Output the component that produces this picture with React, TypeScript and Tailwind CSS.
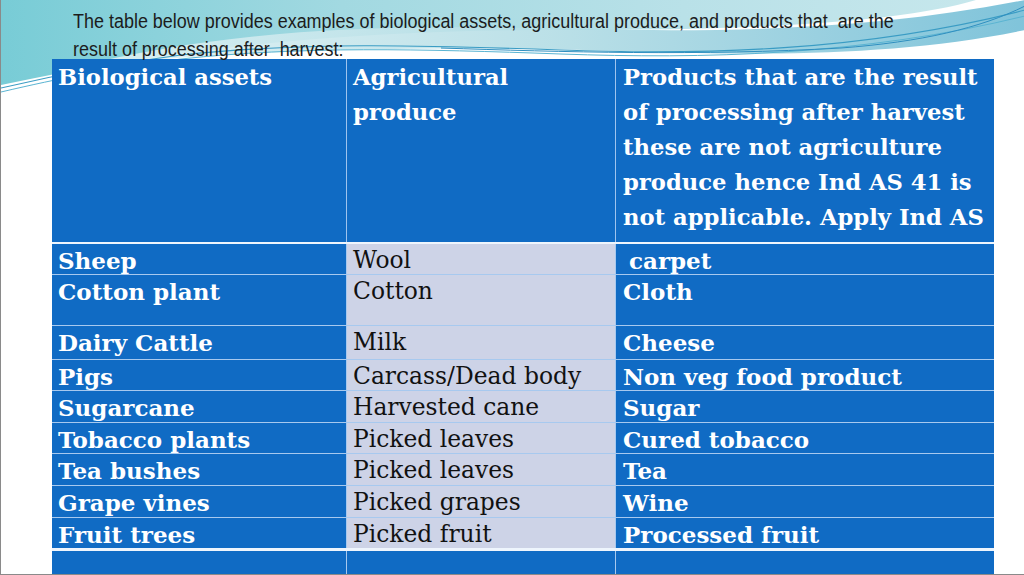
import React from "react";

const serif = { fontFamily: '"DejaVu Serif", "Liberation Serif", serif' };

type Row = { a: string; b: string; c: string; h: string; cPad?: boolean; last?: boolean };

const rows: Row[] = [
  { a: "Sheep", b: "Wool", c: "carpet", h: "h-[31px]", cPad: true },
  { a: "Cotton plant", b: "Cotton", c: "Cloth", h: "h-[51px]" },
  { a: "Dairy Cattle", b: "Milk", c: "Cheese", h: "h-[34px]" },
  { a: "Pigs", b: "Carcass/Dead body", c: "Non veg food product", h: "h-[31px]" },
  { a: "Sugarcane", b: "Harvested cane", c: "Sugar", h: "h-[32px]" },
  { a: "Tobacco plants", b: "Picked leaves", c: "Cured tobacco", h: "h-[31px]" },
  { a: "Tea bushes", b: "Picked leaves", c: "Tea", h: "h-[32px]" },
  { a: "Grape vines", b: "Picked grapes", c: "Wine", h: "h-[32px]" },
  { a: "Fruit trees", b: "Picked fruit", c: "Processed fruit", h: "h-[30px]", last: true },
];

function Decoration() {
  return (
    <svg className="absolute left-0 top-0" width="1024" height="130" viewBox="0 0 1024 130">
      <defs>
        <linearGradient id="tealA" x1="0" y1="0" x2="1" y2="0">
          <stop offset="0" stopColor="#78ccd6" />
          <stop offset="0.35" stopColor="#a2d9e1" />
          <stop offset="0.7" stopColor="#b9e1e8" />
          <stop offset="1" stopColor="#c6e7ec" />
        </linearGradient>
        <linearGradient id="tealB" x1="0" y1="0" x2="1" y2="0">
          <stop offset="0" stopColor="#e2f3f5" />
          <stop offset="0.5" stopColor="#b4dde5" />
          <stop offset="1" stopColor="#72bdd6" />
        </linearGradient>
      </defs>
      <rect x="0" y="0" width="1024" height="130" fill="#ffffff" />
      <path d="M0,0 L975,0 C900,22 760,30 560,30 C380,30 200,42 0,85 Z" fill="url(#tealA)" />
      <path d="M70,68 C200,36 330,24 520,28 C700,32 850,34 1024,0 L1024,30 C900,56 760,56 620,51 C430,45 230,49 70,68 Z" fill="url(#tealB)" opacity="0.9" />
      <path d="M0,88 C60,74 110,64 180,55 C300,42 420,45 560,50 C700,55 860,52 1024,10" fill="none" stroke="#3a9cc4" strokeWidth="1.2" />
      <path d="M0,92 C60,78 110,68 180,59 C300,46 420,49 560,54 C700,59 860,56 1024,16" fill="none" stroke="#5ab4d2" strokeWidth="1" />
      <path d="M440,48 C560,52 700,56 840,48 C920,42 980,28 1024,6" fill="none" stroke="#2f8fc0" strokeWidth="1" />
    </svg>
  );
}

export default function App() {
  return (
    <div className="relative h-[575px] w-[1024px] overflow-hidden border-b border-l border-[#8a8a8a] bg-white">
      <Decoration />
      <div className="relative flex flex-col">
        <div
          className="pl-[72px] pt-[7px] text-[19.5px] leading-[28px] text-[#1c1c1c]"
          style={{ fontFamily: '"Liberation Sans Narrow", "Liberation Sans", Arial, sans-serif' }}
        >
          <div className="origin-left scale-x-[0.921] whitespace-nowrap">
            The table below provides examples of biological assets, agricultural produce, and products that&nbsp; are the
          </div>
          <div className="origin-left scale-x-[0.921] whitespace-nowrap">result of processing after&nbsp; harvest:</div>
        </div>
        <div className="ml-[51px] mt-[-4px] w-[942px]" style={serif}>
          <div className="grid h-[183px] grid-cols-[295px_269px_378px] text-[22.7px] font-bold leading-[35px] text-white">
            <div className="border-r border-[#9fc4ee] bg-[#106bc4] pl-[6px] pt-[1px]">Biological assets</div>
            <div className="border-r border-[#9fc4ee] bg-[#106bc4] pl-[6px] pt-[1px]">
              Agricultural
              <br />
              produce
            </div>
            <div className="whitespace-nowrap bg-[#106bc4] pl-[7px] pt-[1px]">
              Products that are the result
              <br />
              of processing after harvest
              <br />
              these are not agriculture
              <br />
              produce hence Ind AS 41 is
              <br />
              not applicable. Apply Ind AS
            </div>
          </div>
          <div className="h-[2px] bg-[#eef5fd]" />
          {rows.map((r) => (
            <div
              key={r.a}
              className={`grid grid-cols-[295px_269px_378px] leading-[27px] ${r.h} ${
                r.last ? "" : "border-b border-[#a7c9ef]"
              }`}
            >
              <div className="min-h-0 whitespace-nowrap border-r border-[#a7c9ef] bg-[#106bc4] pl-[6px] pt-[3px] text-[23px] font-bold text-white">
                <span className="relative">{r.a}</span>
              </div>
              <div className="min-h-0 whitespace-nowrap border-r border-[#a7c9ef] bg-[#cdd3e7] pl-[6px] pt-[3px] text-[23.4px] text-[#111111]">
                <span className="relative">{r.b}</span>
              </div>
              <div
                className={`min-h-0 whitespace-nowrap bg-[#106bc4] pt-[3px] text-[23px] font-bold text-white ${
                  r.cPad ? "pl-[13px]" : "pl-[7px]"
                }`}
              >
                <span className="relative">{r.c}</span>
              </div>
            </div>
          ))}
          <div className="h-[3px] bg-[#eef5fd]" />
          <div className="grid h-[30px] grid-cols-[295px_269px_378px]">
            <div className="border-r border-[#a7c9ef] bg-[#106bc4]" />
            <div className="border-r border-[#a7c9ef] bg-[#106bc4]" />
            <div className="bg-[#106bc4]" />
          </div>
        </div>
      </div>
    </div>
  );
}
